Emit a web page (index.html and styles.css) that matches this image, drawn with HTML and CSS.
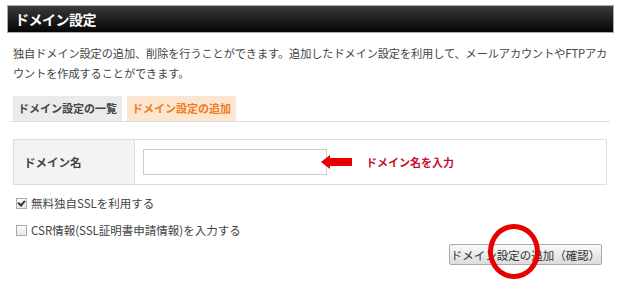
FILE: index.html
```html
<!DOCTYPE html>
<html lang="ja">
	<head>
		<meta charset="UTF-8">
		<title>ドメイン設定</title>
		<link rel="stylesheet" href="styles.css">
	</head>
	<body>
		<div class="page">
			<h1 class="title">ドメイン設定</h1>
			<p class="desc">独自ドメイン設定の追加、削除を行うことができます。追加したドメイン設定を利用して、メールアカウントやFTPアカウントを作成することができます。</p>

			<!-- tabs -->
			<div class="tabs">
				<div class="tab">ドメイン設定の一覧</div>
				<div class="tab active">ドメイン設定の追加</div>
			</div>

			<!-- form -->
			<form class="form">
				<div class="row">
					<div class="label">ドメイン名</div>
					<div class="field">
						<input class="text" type="text">
						<svg class="arrow" width="31" height="14" viewBox="0 0 31 14">
							<polygon points="0,7 9,0 9,3 31,3 31,11 9,11 9,14" fill="#e60000"/>
						</svg>
						<span class="hint">ドメイン名を入力</span>
					</div>
				</div>
				<label class="check"><span class="box on"></span>無料独自SSLを利用する</label>
				<label class="check"><span class="box"></span>CSR情報(SSL証明書申請情報)を入力する</label>
				<div class="actions">
					<button type="button" class="btn">ドメイン設定の追加（確認）</button>
					<span class="ring"></span>
				</div>
			</form>
		</div>
	</body>
</html>
```

FILE: styles.css
```css
body {
	margin: 0;
	background-color: white;
	font-family: "Noto Sans CJK JP", "DejaVu Sans", sans-serif;
	color: #444;
}
.page {
	width: 607px;
	padding: 5px 0 24px 7px;
}
.title {
	margin: 0;
	height: 26px;
	border: 1px solid #aaa;
	background: linear-gradient(#3a3a3a, #050505);
	color: white;
	font-size: 14px;
	font-weight: bold;
	line-height: 26px;
	padding-left: 7px;
	letter-spacing: -0.5px;
}
.desc {
	margin: 10px 0 0 6px;
	width: 596px;
	font-size: 11.2px;
	line-height: 20px;
	letter-spacing: -0.1px;
}
.tabs {
	display: flex;
	gap: 5px;
	margin: 13px 4px 0 3px;
	padding-left: 3px;
	border-bottom: 1px solid #ddd;
}
.tab {
	width: 109px;
	height: 25px;
	line-height: 25px;
	text-align: center;
	background-color: #ebebeb;
	font-size: 11px;
	font-weight: bold;
	color: #444;
}
	.tab.active {
		background-color: #fde6cf;
		color: #f07a20;
	}
.form {
	margin: 17px 7px 0 6px;
}
.row {
	display: flex;
	height: 44px;
	border: 1px solid #ddd;
}
.label {
	width: 110px;
	padding-left: 10px;
	background-color: #f3f3f3;
	border-right: 1px solid #ddd;
	font-size: 11.5px;
	font-weight: bold;
	line-height: 44px;
}
.field {
	display: flex;
	align-items: center;
	padding-left: 8px;
}
.text {
	width: 182px;
	height: 24px;
	margin: 0;
	padding: 0;
	border: 1px solid #ccc;
}
.arrow {
	margin-left: -6px;
}
.hint {
	margin-left: 14px;
	font-size: 11px;
	font-weight: bold;
	color: #c8102e;
}
.check {
	display: flex;
	align-items: center;
	margin: 10px 0 0 3px;
	font-size: 11.5px;
	color: #444;
	height: 16px;
}
	.check + .check {
		margin-top: 11px;
	}
.box {
	width: 9px;
	height: 9px;
	border: 1px solid #aaa;
	background: linear-gradient(#fdfdfd, #e6e6e6);
	margin-right: 4px;
	position: relative;
}
	.box.on::after {
		content: "";
		position: absolute;
		left: 2px;
		top: 0;
		width: 3px;
		height: 5px;
		border: solid #333;
		border-width: 0 2px 2px 0;
		transform: rotate(40deg);
	}
.actions {
	position: relative;
	display: flex;
	justify-content: flex-end;
	margin-top: 6px;
	padding-right: 5px;
}
.btn {
	width: 153px;
	height: 21px;
	margin: 0;
	padding: 0;
	border: 1px solid #aaa;
	border-radius: 2px;
	background: linear-gradient(#fafafa, #dcdcdc);
	font-family: "Noto Sans CJK JP", sans-serif;
	font-size: 11.5px;
	color: #333;
}
.ring {
	position: absolute;
	left: 475px;
	top: -20px;
	width: 42px;
	height: 45px;
	border: 5px solid #e60000;
	border-radius: 50%;
}
```
